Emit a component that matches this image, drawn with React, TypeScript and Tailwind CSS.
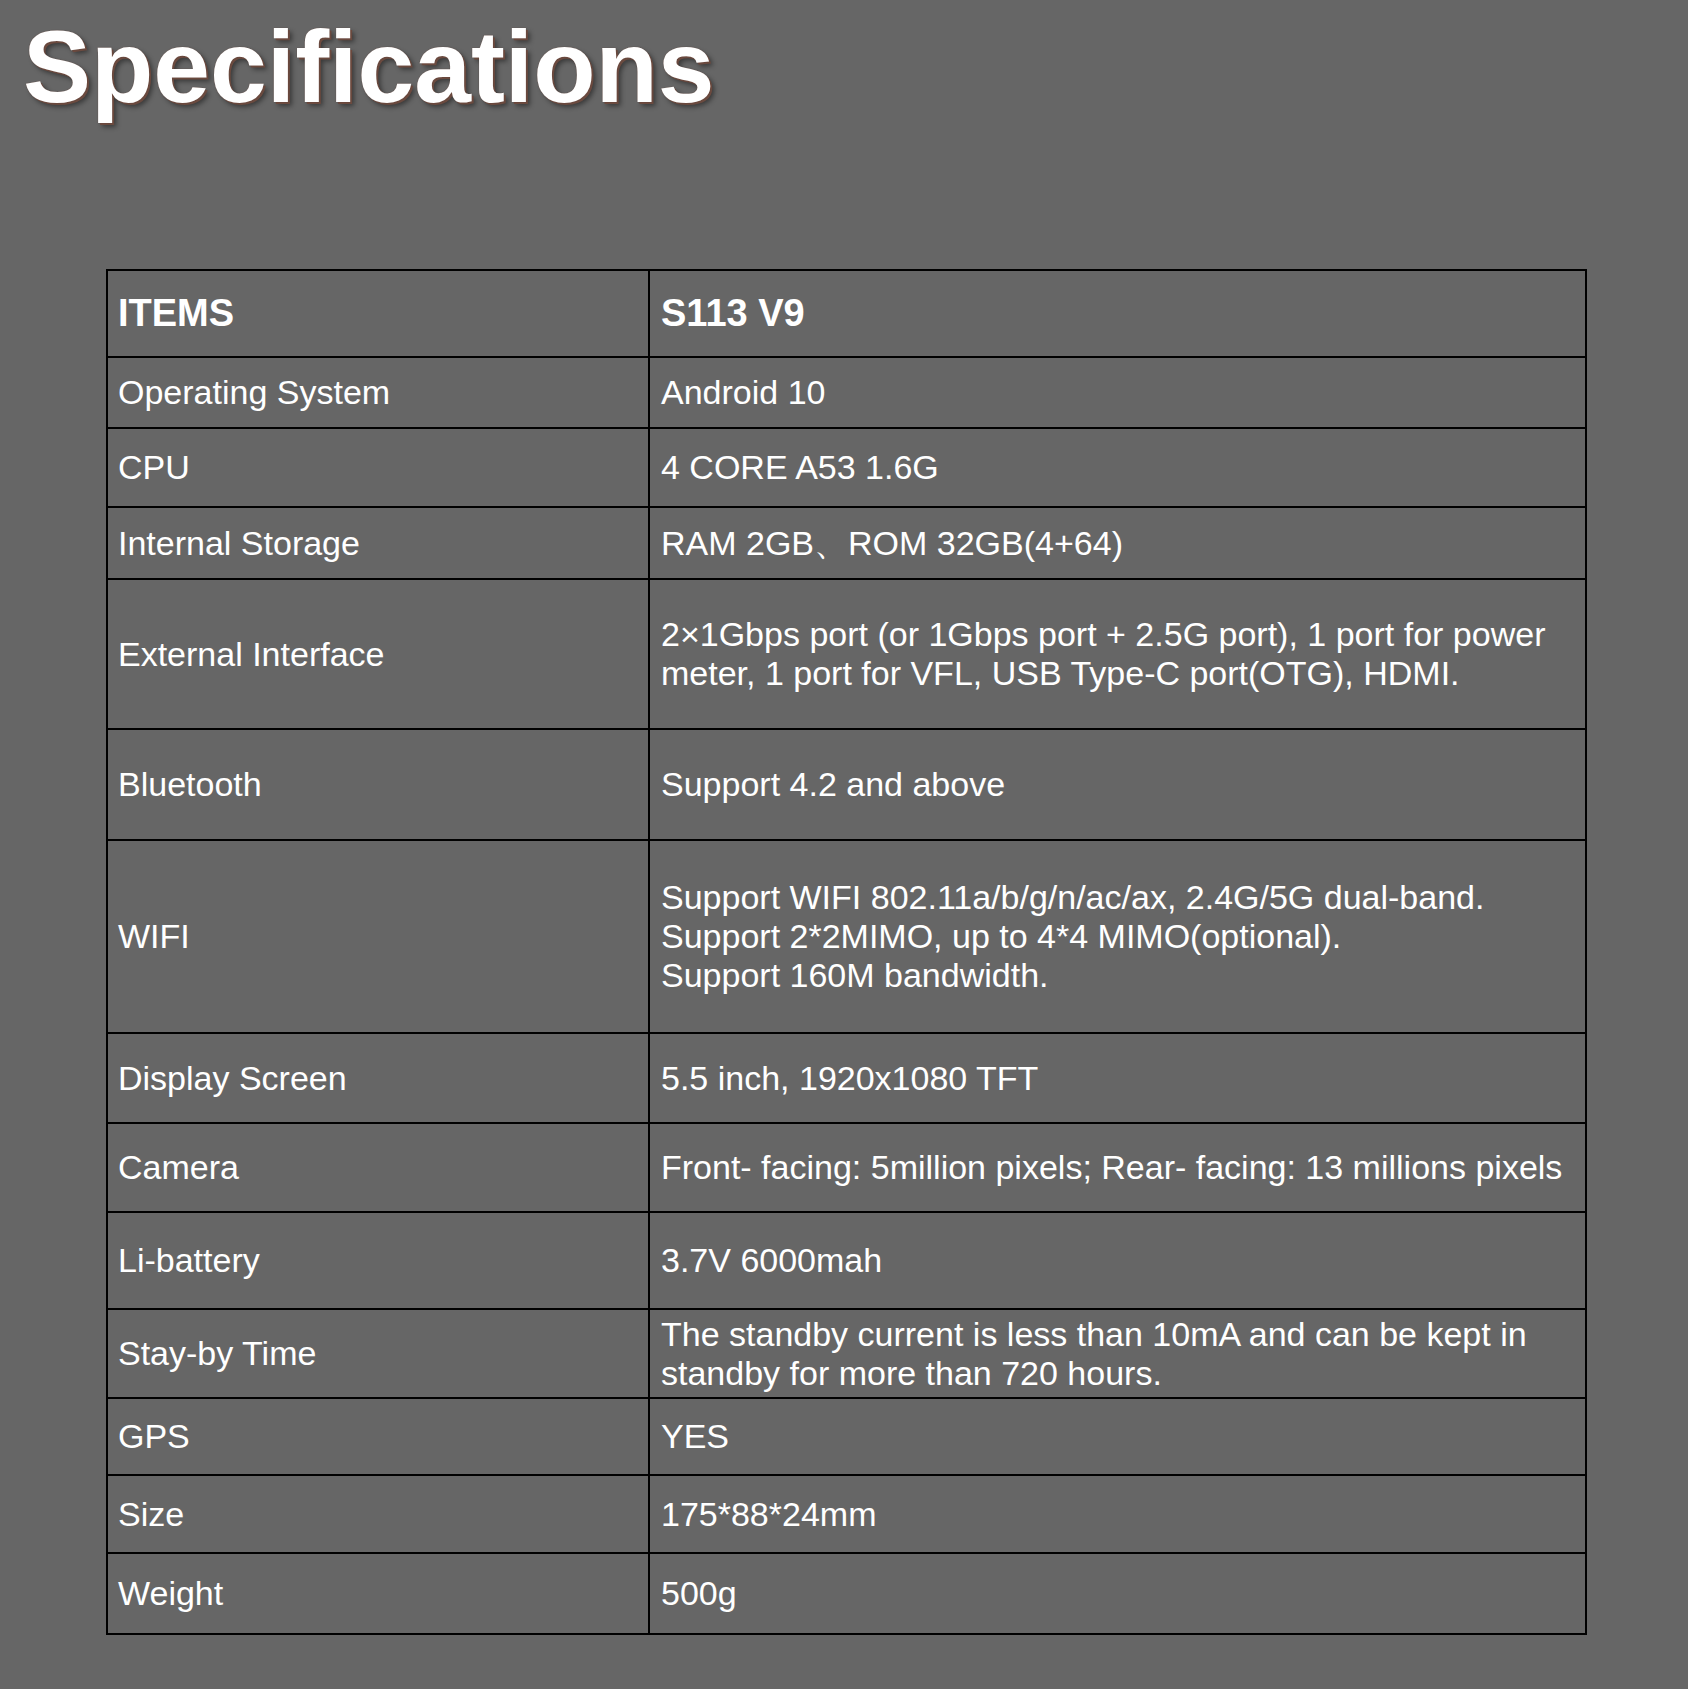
import React from "react";

type Row = { item: string; value: React.ReactNode; h: string };

const rows: Row[] = [
  { item: "Operating System", value: "Android 10", h: "h-[69px]" },
  { item: "CPU", value: "4 CORE A53 1.6G", h: "h-[77px]" },
  { item: "Internal Storage", value: "RAM 2GB、ROM 32GB(4+64)", h: "h-[70px]" },
  {
    item: "External Interface",
    value:
      "2×1Gbps port (or 1Gbps port + 2.5G port), 1 port for power meter, 1 port for VFL, USB Type-C port(OTG), HDMI.",
    h: "h-[148px]",
  },
  { item: "Bluetooth", value: "Support 4.2 and above", h: "h-[109px]" },
  {
    item: "WIFI",
    value: (
      <>
        Support WIFI 802.11a/b/g/n/ac/ax, 2.4G/5G dual-band.
        <br />
        Support 2*2MIMO, up to 4*4 MIMO(optional).
        <br />
        Support 160M bandwidth.
      </>
    ),
    h: "h-[191px]",
  },
  { item: "Display Screen", value: "5.5 inch, 1920x1080 TFT", h: "h-[88px]" },
  {
    item: "Camera",
    value: "Front- facing: 5million pixels; Rear- facing: 13 millions pixels",
    h: "h-[87px]",
  },
  { item: "Li-battery", value: "3.7V 6000mah", h: "h-[95px]" },
  {
    item: "Stay-by Time",
    value:
      "The standby current is less than 10mA and can be kept in standby for more than 720 hours.",
    h: "h-[87px]",
  },
  { item: "GPS", value: "YES", h: "h-[75px]" },
  { item: "Size", value: "175*88*24mm", h: "h-[76px]" },
  { item: "Weight", value: "500g", h: "h-[79px]" },
];

export default function App() {
  return (
    <div className="min-h-[1689px] w-full bg-[#666666] font-['Liberation_Sans',Arial,sans-serif] text-white">
      {/* Title */}
      <h1 className="pl-[23px] pt-[16px] text-[102px] font-bold leading-none [text-shadow:0_0_1px_#5c3b30,2px_2px_0_#6b4a3f,4px_4px_5px_rgba(0,0,0,0.45)]">
        Specifications
      </h1>

      {/* Spec table */}
      <div className="ml-[106px] mt-[151px] grid w-[1481px] grid-cols-[540px_935px] gap-[2px] bg-black p-[2px]">
        <div className="flex h-[85px] items-center bg-[#666666] px-[10px] text-[38px] font-bold">
          ITEMS
        </div>
        <div className="flex h-[85px] items-center bg-[#666666] px-[11px] text-[38px] font-bold">
          S113 V9
        </div>
        {rows.map((r) => (
          <React.Fragment key={r.item}>
            <div
              className={`flex items-center bg-[#666666] px-[10px] text-[34px] leading-[39px] ${r.h}`}
            >
              {r.item}
            </div>
            <div
              className={`flex items-center bg-[#666666] px-[11px] text-[34px] leading-[39px] ${r.h}`}
            >
              <div>{r.value}</div>
            </div>
          </React.Fragment>
        ))}
      </div>
    </div>
  );
}
